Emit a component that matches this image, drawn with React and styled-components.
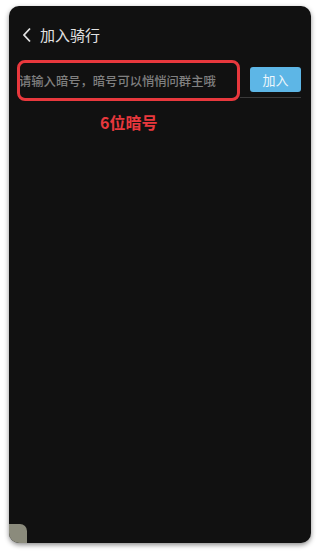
import React from 'react'
import styled, { createGlobalStyle } from 'styled-components'

const Global = createGlobalStyle`
  html, body { margin: 0; padding: 0; background: #fff; }
  body { font-family: "Noto Sans CJK SC", "Noto Sans", sans-serif; }
`

const Page = styled.div`
  width: 320px;
  height: 557px;
  padding: 6px 9px 14px 9px;
  box-sizing: border-box;
  background: #fff;
`

const Phone = styled.div`
  position: relative;
  height: 537px;
  background: #111;
  border-radius: 10px;
  box-shadow: 0 2px 5px rgba(0, 0, 0, 0.45);
  overflow: hidden;
  display: flex;
  flex-direction: column;
`

const Header = styled.div`
  display: flex;
  align-items: center;
  gap: 8px;
  padding: 18px 0 0 13px;
  height: 22px;
  line-height: 22px;
  color: #e2e2e2;
  font-size: 15px;
`

const Row = styled.div`
  display: flex;
  align-items: center;
  margin: 14px 10px 0 8px;
  height: 41px;
  position: relative;
`

const InputBox = styled.div`
  flex: 0 0 223px;
  height: 41px;
  box-sizing: border-box;
  border: 3px solid #e8383d;
  border-radius: 8px;
  display: flex;
  align-items: center;
  overflow: hidden;
`

const Placeholder = styled.span`
  color: #808080;
  font-size: 12.3px;
  font-weight: 500;
  white-space: nowrap;
  margin-left: -1px;
`

const Underline = styled.div`
  position: absolute;
  left: 223px;
  right: 0;
  bottom: 3px;
  height: 1px;
  background: #3a3a3a;
`

const JoinButton = styled.button`
  margin-left: 10px;
  margin-bottom: 2px;
  width: 51px;
  height: 25px;
  border: none;
  border-radius: 3px;
  background: #5db6e6;
  color: #eef6fb;
  font-family: inherit;
  font-size: 13px;
  padding: 0;
`

const Hint = styled.div`
  margin: 10px 0 0 91px;
  line-height: 22px;
  color: #e8383d;
  font-size: 16px;
  font-weight: 700;
`

const Corner = styled.div`
  position: absolute;
  left: 0;
  bottom: 0;
  width: 18px;
  height: 19px;
  background: #8b8b7c;
  border-top-right-radius: 7px;
`

export default function App() {
  return (
    <Page>
      <Global />
      <Phone>
        <Header>
          <svg width="10" height="16" viewBox="0 0 10 16">
            <path d="M8 1.5 L2 8 L8 14.5" fill="none" stroke="#e2e2e2" strokeWidth="1.8" />
          </svg>
          <span>加入骑行</span>
        </Header>
        <Row>
          <InputBox>
            <Placeholder>请输入暗号，暗号可以悄悄问群主哦</Placeholder>
          </InputBox>
          <Underline />
          <JoinButton>加入</JoinButton>
        </Row>
        <Hint>6位暗号</Hint>
        <Corner />
      </Phone>
    </Page>
  )
}
